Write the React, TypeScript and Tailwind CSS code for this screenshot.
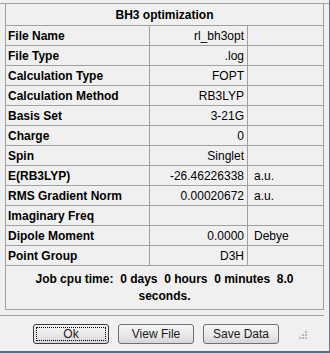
import React from "react";

const rows: [string, string, string][] = [
  ["File Name", "rl_bh3opt", ""],
  ["File Type", ".log", ""],
  ["Calculation Type", "FOPT", ""],
  ["Calculation Method", "RB3LYP", ""],
  ["Basis Set", "3-21G", ""],
  ["Charge", "0", ""],
  ["Spin", "Singlet", ""],
  ["E(RB3LYP)", "-26.46226338", "a.u."],
  ["RMS Gradient Norm", "0.00020672", "a.u."],
  ["Imaginary Freq", "", ""],
  ["Dipole Moment", "0.0000", "Debye"],
  ["Point Group", "D3H", ""],
];

function WinButton({ label, focused }: { label: string; focused?: boolean }) {
  return (
    <button
      className={`relative w-[76px] h-[20px] rounded-[3px] border text-[12px] text-[#1a1a1a] bg-gradient-to-b from-[#f4f4f4] via-[#ebebeb] to-[#d6d6d6] ${
        focused ? "border-[#3c3c3c]" : "border-[#707070]"
      }`}
    >
      {focused && (
        <span className="absolute inset-[2px] border border-dotted border-black rounded-[1px]" />
      )}
      {label}
    </button>
  );
}

export default function App() {
  return (
    <div
      className="w-[330px] h-[353px] bg-[#f0f0f0] border-r border-b-2 border-r-[#6b7785] border-b-[#5d6b7d] overflow-hidden relative"
      style={{ fontFamily: '"Liberation Sans", Arial, sans-serif' }}
    >
      <div className="h-[3px]" />
      <div className="border-t border-[#a0a0a0]">
        <div className="ml-[5px] w-[319px] border-l border-r border-b border-[#a0a0a0]">
          <div className="h-[22px] border-b border-[#a0a0a0] flex items-center justify-center font-bold text-[12px] text-black">
            BH3 optimization
          </div>
          {rows.map(([label, value, unit]) => (
            <div
              key={label}
              className="h-[20px] border-b border-[#a0a0a0] grid grid-cols-[144px_98px_1fr] text-[12px] text-black"
            >
              <div className="border-r border-[#a0a0a0] flex items-center pl-[2px] font-bold">
                {label}
              </div>
              <div className="border-r border-[#a0a0a0] flex items-center justify-end pr-[3px]">
                {value}
              </div>
              <div className="flex items-center pl-[6px]">{unit}</div>
            </div>
          ))}
          <div className="h-[43px] flex flex-col items-center justify-center font-bold text-[12px] leading-[17px] text-black whitespace-pre">
            <div>Job cpu time:  0 days  0 hours  0 minutes  8.0</div>
            <div>seconds.</div>
          </div>
        </div>
      </div>
      <div className="mt-[5px] w-[324px] border-t border-[#a0a0a0]" />
      <div className="mt-[8px] flex gap-[9px] pl-[33px]">
        <WinButton label="Ok" focused />
        <WinButton label="View File" />
        <WinButton label="Save Data" />
      </div>
      <div className="absolute right-[22px] bottom-[12px] w-[8px] h-[8px]">
        <span className="absolute right-0 bottom-0 w-[2px] h-[2px] bg-[#b8b8b8]" />
        <span className="absolute right-[3px] bottom-0 w-[2px] h-[2px] bg-[#b8b8b8]" />
        <span className="absolute right-[6px] bottom-0 w-[2px] h-[2px] bg-[#b8b8b8]" />
        <span className="absolute right-0 bottom-[3px] w-[2px] h-[2px] bg-[#b8b8b8]" />
        <span className="absolute right-[3px] bottom-[3px] w-[2px] h-[2px] bg-[#b8b8b8]" />
        <span className="absolute right-0 bottom-[6px] w-[2px] h-[2px] bg-[#b8b8b8]" />
      </div>
    </div>
  );
}
